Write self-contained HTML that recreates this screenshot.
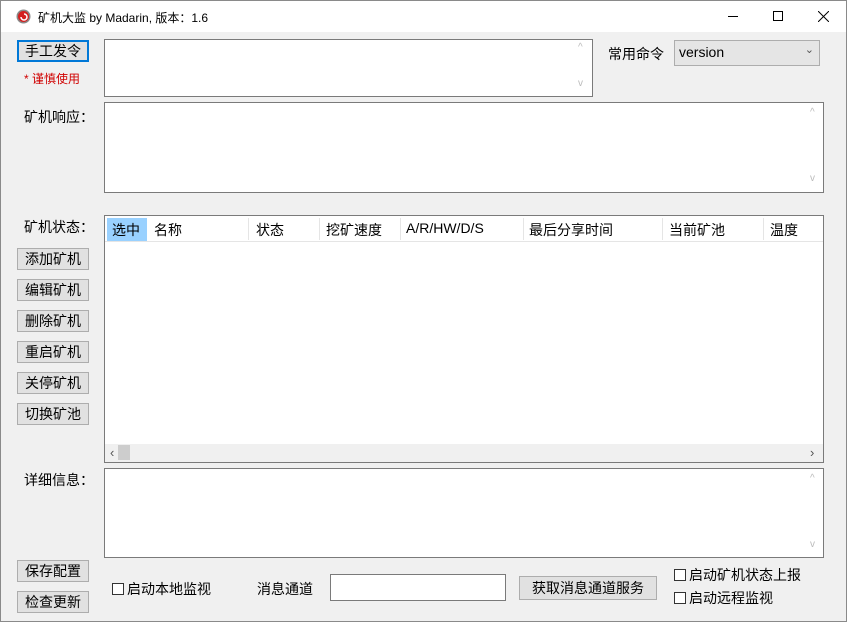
<!DOCTYPE html>
<html><head><meta charset="utf-8"><style>
*{box-sizing:border-box;margin:0;padding:0}
body{width:854px;height:629px;background:#fff;font-family:"Liberation Sans","Noto Sans CJK SC",sans-serif;font-size:14px;color:#000;position:relative;overflow:hidden}
.win{position:absolute;left:0;top:0;width:847px;height:622px;border:1px solid #8a8a8a;background:#f0f0f0}
.title{position:absolute;left:0;top:0;width:845px;height:31px;background:#fff}
.a{position:absolute;white-space:nowrap}
.btn{position:absolute;width:72px;height:22px;background:#e1e1e1;border:1px solid #adadad;text-align:center;line-height:20px;font-size:14px}
.box{position:absolute;background:#fff;border:1px solid #7a7a7a}
.sa{position:absolute;color:#bbb;font-size:10px}
.cb{display:inline-block;width:12px;height:12px;border:1px solid #333;background:#fff;vertical-align:-1px;margin-right:3px}
.col{position:absolute;top:4px}
.sep{position:absolute;top:2px;width:1px;height:22px;background:#e5e5e5}
</style></head><body>
<div class="win">
<div class="title">
<svg class="a" style="left:15px;top:8px" width="15" height="15" viewBox="0 0 15 15"><circle cx="7.5" cy="7.5" r="7" fill="#888"/><circle cx="7.5" cy="7.5" r="5.5" fill="#d42020"/><path d="M5 8a3 3 0 1 0 3-3" stroke="#fff" stroke-width="1.5" fill="none"/></svg>
<div class="a" style="left:37px;top:8px;font-size:12px">矿机大监 by Madarin, 版本：1.6</div>
<div class="a" style="left:727px;top:15px;width:10px;height:1px;background:#000"></div>
<div class="a" style="left:772px;top:10px;width:10px;height:10px;border:1px solid #000"></div>
<svg class="a" style="left:817px;top:10px" width="11" height="11"><path d="M0 0L11 11M11 0L0 11" stroke="#000"/></svg>
</div>
<div class="btn" style="left:16px;top:39px;border:2px solid #0078d7;line-height:18px">手工发令</div>
<div class="a" style="left:23px;top:69px;font-size:12px;color:#d00000">* 谨慎使用</div>
<div class="box" style="left:103px;top:38px;width:489px;height:58px"><span class="sa" style="left:473px;top:2px">^</span><span class="sa" style="left:473px;top:38px">v</span></div>
<div class="a" style="left:607px;top:43px">常用命令</div>
<div class="a" style="left:673px;top:39px;width:146px;height:26px;background:#e5e5e5;border:1px solid #adadad;padding:3px 0 0 4px">version<span class="a" style="right:5px;top:2px;font-size:11px;color:#555">⌄</span></div>
<div class="a" style="left:23px;top:106px">矿机响应：</div>
<div class="box" style="left:103px;top:101px;width:720px;height:91px"><span class="sa" style="left:705px;top:4px">^</span><span class="sa" style="left:705px;top:70px">v</span></div>
<div class="a" style="left:23px;top:216px">矿机状态：</div>
<div class="box" style="left:103px;top:214px;width:720px;height:248px">
<div class="a" style="left:2px;top:2px;width:40px;height:24px;background:#99d1ff"></div>
<div class="a" style="left:0;top:25px;width:718px;height:1px;background:#e5e5e5"></div>
<span class="col" style="left:7px">选中</span><span class="col" style="left:49px">名称</span>
<span class="sep" style="left:143px"></span><span class="col" style="left:151px">状态</span>
<span class="sep" style="left:214px"></span><span class="col" style="left:221px">挖矿速度</span>
<span class="sep" style="left:295px"></span><span class="col" style="left:301px">A/R/HW/D/S</span>
<span class="sep" style="left:418px"></span><span class="col" style="left:424px">最后分享时间</span>
<span class="sep" style="left:557px"></span><span class="col" style="left:564px">当前矿池</span>
<span class="sep" style="left:658px"></span><span class="col" style="left:665px">温度</span>
<div class="a" style="left:0;top:228px;width:718px;height:18px;background:#f0f0f0"><span class="a" style="left:5px;top:1px;font-size:13px;color:#555">‹</span><div class="a" style="left:13px;top:1px;width:12px;height:15px;background:#cdcdcd"></div><span class="a" style="left:705px;top:1px;font-size:13px;color:#555">›</span></div>
</div>
<div class="btn" style="left:16px;top:247px">添加矿机</div>
<div class="btn" style="left:16px;top:278px">编辑矿机</div>
<div class="btn" style="left:16px;top:309px">删除矿机</div>
<div class="btn" style="left:16px;top:340px">重启矿机</div>
<div class="btn" style="left:16px;top:371px">关停矿机</div>
<div class="btn" style="left:16px;top:402px">切换矿池</div>
<div class="a" style="left:23px;top:469px">详细信息：</div>
<div class="box" style="left:103px;top:467px;width:720px;height:90px"><span class="sa" style="left:705px;top:4px">^</span><span class="sa" style="left:705px;top:70px">v</span></div>
<div class="btn" style="left:16px;top:559px">保存配置</div>
<div class="btn" style="left:16px;top:590px">检查更新</div>
<div class="a" style="left:111px;top:578px"><span class="cb"></span>启动本地监视</div>
<div class="a" style="left:256px;top:578px">消息通道</div>
<div class="a" style="left:329px;top:573px;width:176px;height:27px;background:#fff;border:1px solid #7a7a7a"></div>
<div class="btn" style="left:518px;top:575px;width:138px;height:24px;line-height:22px">获取消息通道服务</div>
<div class="a" style="left:673px;top:564px"><span class="cb"></span>启动矿机状态上报</div>
<div class="a" style="left:673px;top:587px"><span class="cb"></span>启动远程监视</div>
</div>
</body></html>
